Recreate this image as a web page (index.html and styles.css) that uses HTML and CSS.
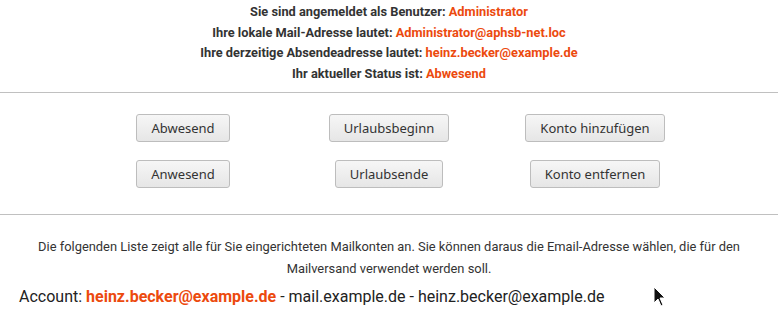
FILE: index.html
```html
<!DOCTYPE html>
<html>
<head>
    <meta charset="UTF-8">
    <title>Abwesenheit - Mailkonten</title>
    <link rel="stylesheet" href="styles.css">
</head>
<body>
    <div class="page">
        <div class="status">
            <p>Sie sind angemeldet als Benutzer: <span class="hl">Administrator</span></p>
            <p>Ihre lokale Mail-Adresse lautet: <span class="hl">Administrator@aphsb-net.loc</span></p>
            <p>Ihre derzeitige Absendeadresse lautet: <span class="hl">heinz.becker@example.de</span></p>
            <p>Ihr aktueller Status ist: <span class="hl">Abwesend</span></p>
        </div>

        <hr>

        <div class="actions">
            <button type="button">Abwesend</button>
            <button type="button">Urlaubsbeginn</button>
            <button type="button">Konto hinzufügen</button>
            <button type="button">Anwesend</button>
            <button type="button">Urlaubsende</button>
            <button type="button">Konto entfernen</button>
        </div>

        <hr>

        <p class="info">Die folgenden Liste zeigt alle für Sie eingerichteten Mailkonten an. Sie können daraus die Email-Adresse wählen, die für den Mailversand verwendet werden soll.</p>

        <div class="account">
            Account: <span class="hl">heinz.becker@example.de</span> - mail.example.de - heinz.becker@example.de
        </div>
    </div>

    <svg class="cursor" width="14" height="22" viewBox="0 0 14 22">
        <path d="M1 1 L1 17 L5 13 L8 20 L10 19 L7 12 L12 12 Z" fill="#111" stroke="#fff" stroke-width="1"/>
    </svg>
</body>
</html>
```

FILE: styles.css
```css
body {
    margin: 0;
    font-family: Roboto, "Liberation Sans", sans-serif;
    color: #333;
    background: #fff;
}
.page {
    width: 778px;
}
.status {
    text-align: center;
    font-size: 12.8px;
    font-weight: bold;
    padding-top: 2px;
}
.status p {
    margin: 0;
    line-height: 20.5px;
}
.hl {
    color: #ec4a0e;
    font-weight: bold;
}
hr {
    border: none;
    border-top: 1px solid #c0c0c0;
    margin: 0;
}
.status + hr {
    margin-top: 8px;
}
.actions {
    display: grid;
    grid-template-columns: repeat(3, 206px);
    justify-content: center;
    justify-items: center;
    row-gap: 18px;
    padding: 21px 0 26px;
}
button {
    font-family: "Noto Sans", "Open Sans", sans-serif;
    font-size: 13px;
    color: #333;
    height: 28px;
    padding: 0 14px;
    background: linear-gradient(#f6f6f6, #e6e6e6);
    border: 1px solid #bdbdbd;
    border-radius: 3px;
}
.info {
    font-size: 12.9px;
    line-height: 22px;
    text-align: center;
    margin: 21px 30px 0;
}
.account {
    font-size: 16px;
    color: #222;
    padding: 7px 0 0 19px;
}
.cursor {
    position: absolute;
    left: 653px;
    top: 286px;
}
```
